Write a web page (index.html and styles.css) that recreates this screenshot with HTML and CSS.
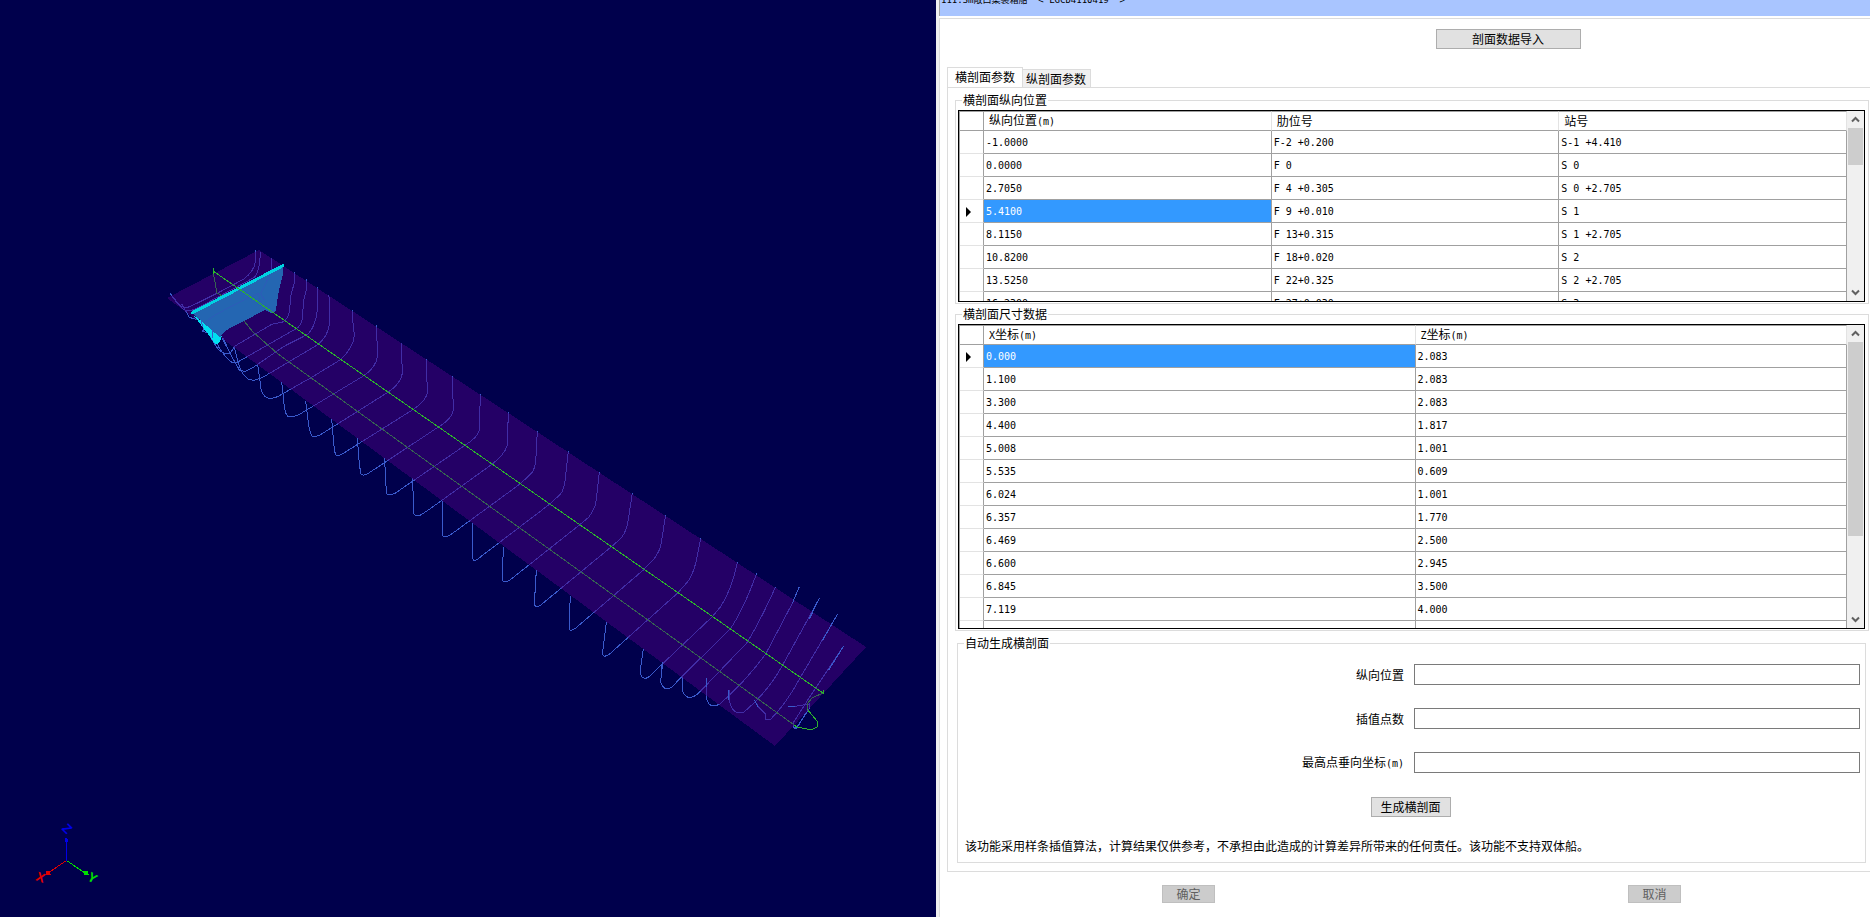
FILE: index.html
```html
<!DOCTYPE html>
<html lang="zh-CN">
<head>
<meta charset="utf-8">
<title>剖面数据</title>
<link rel="stylesheet" href="styles.css">
</head>
<body>
<main class="app">
  <section class="viewport" aria-label="船体三维视图">
    <svg class="scene" viewBox="0 0 936 917" preserveAspectRatio="xMinYMin slice">
      <g class="station">
        <g transform="translate(150 230) scale(.33333)">
          <path d="M316 60V95Q312 125 280 148L205 188 120 230Q100 236 88 225L60 190"/>
          <path d="M331 67Q330 120 315 140L290 155 135 238Q115 245 100 238L65 200"/>
          <path d="M364 85V130Q345 165 332 190L343 210 325 190Q165 265 165 280L158 305 187 310"/>
          <path d="M95 222L118 262 150 272"/>
          <path d="M434 125L433 158 423 195 418 245Q412 270 398 276L365 283 255 348 240 370 225 370Q205 365 190 335L155 275"/>
          <path d="M469 146V180L460 215 458 260Q455 288 438 296L288 382 262 397H245Q200 360 187 300"/>
          <path d="M502 170V240Q498 285 475 312L400 350 310 412 285 425 268 420 240 370 220 325"/>
          <path d="M537 195L538 285Q532 320 505 343L350 435 330 445Q310 455 295 447 275 435 265 400L254 355"/>
          <path d="M607 240L608 270 613 315Q610 355 570 390L485 442 400 490Q375 507 355 505 332 498 331 460L323 405"/>
          <path d="M679 286L683 375Q680 412 640 438L450 552Q425 565 412 558 403 545 401 510L395 456"/>
          <path d="M754 338L757 430Q754 460 712 488L510 615Q495 622 485 618 477 600 474 570L467 512"/>
          <path d="M829 388L832 490Q826 515 787 540L580 670Q566 680 556 674L551 640 545 567"/>
          <path d="M907 438L910 540Q906 568 862 593L655 730Q640 740 632 732L627 690 622 625"/>
          <path d="M991 492L988 600Q984 622 942 648L735 790Q718 796 711 792L707 760 704 685"/>
          <path d="M1075 546L1072 645Q1066 672 1023 705L838 838 812 855Q795 860 791 850L788 745"/>
        </g>
        <g transform="translate(400 350) scale(.33333)">
          <path d="M412 243L408 320Q407 360 390 374L360 402 148 557Q130 565 128 555L126 452"/>
          <path d="M505 304L497 375Q494 420 480 434L447 464 232 628Q220 636 218 625L217 520"/>
          <path d="M598 366L588 455Q584 480 565 503L537 526 330 690Q312 702 307 690L310 590"/>
          <path d="M697 430L683 520Q676 555 655 572L632 592 420 767Q404 773 403 762L409 660"/>
          <path d="M797 495L782 590Q770 620 757 632L730 660 525 836Q510 846 507 835L511 737"/>
        </g>
        <g transform="translate(600 500) scale(.33333)">
          <path d="M302 115L287 190Q275 235 257 252L232 280 30 461Q10 476 7 462L19 367"/>
          <path d="M412 187Q395 270 362 320L337 350 187 492 145 532Q122 543 121 510L130 447"/>
          <path d="M470 220Q430 330 390 388L247 528 215 562Q190 575 182 545L188 487"/>
          <path d="M527 260Q490 345 442 427L300 575Q265 610 248 575V528"/>
          <path d="M598 260L577 310 497 462Q440 540 360 612 325 630 319 590V535"/>
          <path d="M658 295L547 497Q500 580 430 638 395 645 388 600V571"/>
          <path d="M713 342L600 534Q560 610 510 660H497L495 640 475 620 463 600"/>
          <path d="M731 438L620 605 582 665V683H590L628 625V612L585 619H565"/>
        </g>
      </g>
      <g class="keel">
        <path d="M213 271L217 293 224 297M244 321L253 332 278 354 400 442 797 727"/>
        <path d="M823 693L812 698 807 704V709"/>
      </g>
      <path class="waterplane" d="M167 298L259 250 866 647 775 746Z"/>
      <g class="station" transform="translate(600 500) scale(.33333)">
        <path d="M577 310L598 260M628 357L658 295M668 420L713 342M686 510L731 438M565 619H585M620 635L590 685H582M463 600L475 622M386 571V600M319 535V560M188 487L183 510"/>
      </g>
      <g transform="translate(150 230) scale(.33333)">
        <path class="cut-side" d="M130 255L215 318 210 335 203 343 195 342 180 320Z"/>
        <path class="cut-face" d="M130 252L401 108 398 135 385 190 378 240 372 250 362 248 345 240 230 300 217 312 210 322Z"/>
        <path class="cut-trace" d="M364 125Q345 165 332 190L343 210M333 222L325 190Q165 265 165 280"/>
        <path class="cut-edge" d="M124 250L402 105"/>
      </g>
      <g class="station"><path d="M212 330L213 338M222 338L229 351M201 321L203 327"/></g>
      <path class="centerline" d="M213 268V271L823 693V690M807 709L817 721V727L813 729H807L797 727"/>
      <g class="axes">
        <g class="axis-x"><path d="M66.500 860.500L48 873"/><path class="tip" d="M46 874V872L49 871 50 874Z"/><text x="36" y="882" transform="rotate(20 41 878)">X</text></g>
        <g class="axis-y"><path d="M66.500 860.500L85 873"/><path class="tip" d="M84 874V872L87 871 88 874Z"/><text x="88" y="882" transform="rotate(30 92 878)">Y</text></g>
        <g class="axis-z"><path d="M66.500 860.500V840"/><path class="tip" d="M66 838L68 840 67 842 65 841Z"/><text x="63" y="833" transform="rotate(45 67 829)">Z</text></g>
      </g>
    </svg>
  </section>

  <section class="dialog">
    <header class="titlebar">111.3m敞口集装箱船  &lt; LGCD4110419  &gt;</header>
    <div class="body">
      <div class="toolbar"><button type="button" class="btn btn-import">剖面数据导入</button></div>
      <div class="tabs" role="tablist">
        <button type="button" role="tab" class="tab active" aria-selected="true">横剖面参数</button>
        <button type="button" role="tab" class="tab" aria-selected="false">纵剖面参数</button>
      </div>
      <div class="page" role="tabpanel">
        <fieldset class="group">
          <legend>横剖面纵向位置</legend>
          <div class="grid grid-positions">
            <div class="rows">
              <table>
                <colgroup><col class="c-mark"><col><col><col></colgroup>
                <thead><tr><th></th><th>纵向位置<span class="num">(m)</span></th><th>肋位号</th><th>站号</th></tr></thead>
                <tbody>
                  <tr><td></td><td>-1.0000</td><td>F-2 +0.200</td><td>S-1 +4.410</td></tr>
                  <tr><td></td><td>0.0000</td><td>F 0</td><td>S 0</td></tr>
                  <tr><td></td><td>2.7050</td><td>F 4 +0.305</td><td>S 0 +2.705</td></tr>
                  <tr><td><i class="marker"></i></td><td class="selected">5.4100</td><td>F 9 +0.010</td><td>S 1</td></tr>
                  <tr><td></td><td>8.1150</td><td>F 13+0.315</td><td>S 1 +2.705</td></tr>
                  <tr><td></td><td>10.8200</td><td>F 18+0.020</td><td>S 2</td></tr>
                  <tr><td></td><td>13.5250</td><td>F 22+0.325</td><td>S 2 +2.705</td></tr>
                  <tr><td></td><td>16.2300</td><td>F 27+0.030</td><td>S 3</td></tr>
                </tbody>
              </table>
            </div>
            <div class="scroll">
              <svg class="arrow" viewBox="0 0 17 17"><path d="M5 10.500L8.500 7 12 10.500"/></svg>
              <div class="track"><div class="thumb thumb-short"></div></div>
              <svg class="arrow" viewBox="0 0 17 17"><path d="M5 6.500L8.500 10 12 6.500"/></svg>
            </div>
          </div>
        </fieldset>

        <fieldset class="group">
          <legend>横剖面尺寸数据</legend>
          <div class="grid grid-sizes">
            <div class="rows">
              <table>
                <colgroup><col class="c-mark"><col><col></colgroup>
                <thead><tr><th></th><th><span class="num">X</span>坐标<span class="num">(m)</span></th><th><span class="num">Z</span>坐标<span class="num">(m)</span></th></tr></thead>
                <tbody>
                  <tr><td><i class="marker"></i></td><td class="selected">0.000</td><td>2.083</td></tr>
                  <tr><td></td><td>1.100</td><td>2.083</td></tr>
                  <tr><td></td><td>3.300</td><td>2.083</td></tr>
                  <tr><td></td><td>4.400</td><td>1.817</td></tr>
                  <tr><td></td><td>5.008</td><td>1.001</td></tr>
                  <tr><td></td><td>5.535</td><td>0.609</td></tr>
                  <tr><td></td><td>6.024</td><td>1.001</td></tr>
                  <tr><td></td><td>6.357</td><td>1.770</td></tr>
                  <tr><td></td><td>6.469</td><td>2.500</td></tr>
                  <tr><td></td><td>6.600</td><td>2.945</td></tr>
                  <tr><td></td><td>6.845</td><td>3.500</td></tr>
                  <tr><td></td><td>7.119</td><td>4.000</td></tr>
                  <tr><td></td><td></td><td></td></tr>
                </tbody>
              </table>
            </div>
            <div class="scroll">
              <svg class="arrow" viewBox="0 0 17 17"><path d="M5 10.500L8.500 7 12 10.500"/></svg>
              <div class="track"><div class="thumb thumb-long"></div></div>
              <svg class="arrow" viewBox="0 0 17 17"><path d="M5 6.500L8.500 10 12 6.500"/></svg>
            </div>
          </div>
        </fieldset>

        <fieldset class="group group-auto">
          <legend>自动生成横剖面</legend>
          <div class="form">
            <label for="pos">纵向位置</label><input id="pos" type="text">
            <label for="count">插值点数</label><input id="count" type="text">
            <label for="top">最高点垂向坐标<span class="num">(m)</span></label><input id="top" type="text">
          </div>
          <div class="generate"><button type="button" class="btn btn-generate">生成横剖面</button></div>
          <p class="note">该功能采用样条插值算法，计算结果仅供参考，不承担由此造成的计算差异所带来的任何责任。该功能不支持双体船。</p>
        </fieldset>
      </div>
      <footer class="actions">
        <button type="button" class="btn btn-action" disabled>确定</button>
        <button type="button" class="btn btn-action" disabled>取消</button>
      </footer>
    </div>
  </section>
</main>
</body>
</html>
```
FILE: styles.css
```css
* { box-sizing: border-box; }

body {
  margin: 0;
  font: 12px/14px "Noto Sans CJK SC", sans-serif;
  color: #000;
  background: #fff;
}

button, input { font: inherit; color: inherit; border-radius: 0; }

.num { font: 10px/14px "DejaVu Sans Mono", monospace; }

.app {
  display: grid;
  grid-template-columns: 936fr 934fr;
  height: 100vh;
  overflow: hidden;
}

/* 3D view */
.viewport { background: #00004c; overflow: hidden; }
.scene { display: block; width: 100%; height: 100%; shape-rendering: crispEdges; }
.scene path { fill: none; }
.station { stroke: #3a5acc; stroke-width: 1; }
.station path, .cut-trace { vector-effect: non-scaling-stroke; }
.keel { stroke: #24c824; stroke-width: 1; }
.scene .waterplane { fill: #480080; fill-opacity: .5; }
.scene .cut-side { fill: #00e0f0; }
.scene .cut-face { fill: #2466b2; }
.cut-trace { stroke: #2c5cb8; stroke-width: 1; }
.cut-edge { stroke: #00d2e2; stroke-width: 9; }
.centerline { stroke: #2cb42c; stroke-width: 1; }
.axes { font: bold 13px "Liberation Sans", sans-serif; stroke-width: 1; }
.axis-x { stroke: #e00000; }
.axis-x text, .axis-x .tip { fill: #e00000; }
.axis-y { stroke: #00e000; }
.axis-y text, .axis-y .tip { fill: #00e000; }
.axis-z { stroke: #0000e8; }
.axis-z text, .axis-z .tip { fill: #0000e8; }
.axes text { stroke: none; }

/* Dialog */
.dialog {
  display: flex;
  flex-direction: column;
  min-width: 0;
  border-left: 3px solid #f0f0f0;
}
.titlebar {
  display: flex;
  align-items: flex-end;
  flex: none;
  height: 16px;
  padding: 0 0 10px 1px;
  overflow: hidden;
  white-space: pre;
  font: 9px/12px "DejaVu Sans Mono", "Noto Sans CJK SC", monospace;
  background: #a9c5ff;
  border-left: 1px solid #a0a0a0;
}
.body {
  flex: 1;
  display: flex;
  flex-direction: column;
  margin-top: 2px;
  padding-left: 7px;
  border: solid #dcdcdc;
  border-width: 1px 0 0 1px;
}
.toolbar { display: flex; justify-content: center; padding: 10px 0 18px 199px; }

.btn {
  height: 20px;
  padding: 0;
  line-height: 18px;
  background: #e1e1e1;
  border: 1px solid #adadad;
}
.btn:disabled { color: #606060; background: #ccc; border-color: #bfbfbf; }
.btn-import { width: 145px; }
.btn-generate { width: 80px; }
.btn-action { width: 53px; height: 18px; line-height: 16px; }

.tabs { display: flex; align-items: flex-end; height: 20px; }
.tab {
  height: 18px;
  padding: 0 4px 0 3px;
  line-height: 18px;
  background: #f0f0f0;
  border: 1px solid #dcdcdc;
  border-width: 1px 1px 0 0;
}
.tab.active {
  height: 21px;
  margin-bottom: -1px;
  padding: 0 7px 2px 7px;
  background: #fff;
  border-width: 1px 1px 0 1px;
}
.page {
  padding: 5px 1px 8px 7px;
  border: solid #dcdcdc;
  border-width: 1px 0 1px 1px;
}

.group {
  min-width: 0;
  margin: 0 0 3px;
  padding: 3px 3px 1px 2px;
  border: 1px solid #dcdcdc;
}
.group legend { margin-left: 4px; padding: 0 1px; }

/* Data grids */
.grid { display: flex; border: 1px solid #000; overflow: hidden; }
.grid-positions { height: 192px; }
.grid-sizes { height: 305px; }
.rows { flex: 1; min-width: 0; overflow: hidden; border-left: 1px solid #a0a0a0; }
table { width: 100%; table-layout: fixed; border-spacing: 0; }
.c-mark { width: 24px; }
th, td { padding: 0; text-align: left; white-space: pre; overflow: hidden; border: solid #a0a0a0; border-width: 0 1px 1px 0; }
th {
  height: 20px;
  padding-left: 5px;
  font-weight: normal;
  border-top-width: 1px;
  border-right-color: #e3e3e3;
}
td { height: 23px; padding: 2px 0 0 2px; font: 10px/14px "DejaVu Sans Mono", monospace; }
td:first-child { padding-left: 6px; border-bottom-color: #e3e3e3; }
th:first-child { border-right-color: #a0a0a0; }
.selected { color: #fff; background: #39f; }
.marker {
  display: block;
  width: 0;
  border: solid transparent;
  border-width: 5px 0 5px 5px;
  border-left-color: #000;
}
.scroll { display: flex; flex-direction: column; width: 17px; background: #f0f0f0; }
.arrow { flex: none; width: 17px; height: 17px; fill: none; stroke: #606060; stroke-width: 2; }
.track { flex: 1; padding: 0 1px; }
.thumb { background: #cdcdcd; }
.thumb-short { height: 24%; }
.thumb-long { height: 72%; }

/* Generator form */
.group-auto { margin: 5px 3px 0 2px; padding: 14px 5px 9px 7px; }
.group-auto legend { margin-left: -1px; }
.form {
  display: grid;
  grid-template-columns: 449fr 446fr;
  row-gap: 23px;
  align-items: center;
}
.form label { padding-right: 10px; text-align: right; }
.form input { width: 100%; height: 21px; padding: 0 3px; background: #fff; border: 1px solid #7a7a7a; }
.generate { display: flex; justify-content: center; padding: 24px 4px 22px 0; }
.note { margin: 0; }

.actions { display: flex; justify-content: space-between; padding: 13px 189px 0 215px; }
```
